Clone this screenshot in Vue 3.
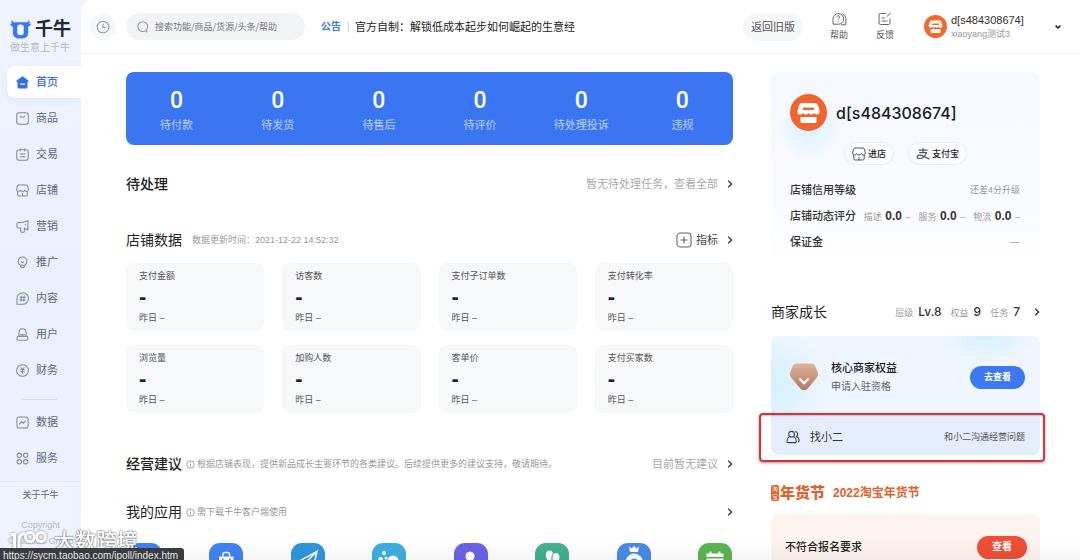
<template>
    <div class="shell">
        <aside class="sidebar">
            <div class="brand">
                <div class="brand-row">
                    <svg class="brand-logo" viewBox="0 0 22 22" aria-hidden="true">
                        <path d="M2 1.2C2.6 3 3.6 3.8 5.4 4h11.2c1.8-.2 2.8-1 3.4-2.8 1 2.4.8 4.600-1 6.200v7.400c0 3.800-2.400 6.200-8 6.200s-8-2.400-8-6.200V7.400C1.200 5.800 1 3.600 2 1.200z" fill="#3b78f0" />
                        <path d="M0 5.200l3.400 1v2.400C1.600 8.400.5 7.200 0 5.200zM22 5.200l-3.400 1v2.400c1.800-.2 2.900-1.400 3.400-3.400z" fill="#3b78f0" />
                        <rect x="7.600" y="6.400" width="6.800" height="11" rx="3" fill="#f3f6ff" />
                    </svg>
                    <span class="brand-name">千牛</span>
                </div>
                <p class="brand-slogan">做生意上千牛</p>
            </div>
            <nav class="nav">
                <template v-for="item in navItems" :key="item.name">
                    <hr v-if="item.divided" class="nav-divider">
                    <a href="#" :class="['nav-item', { active: item.active }]">
                        <svg class="nav-icon" viewBox="0 0 14 14" aria-hidden="true">
                            <path v-for="d in item.paths" :key="d" :d="d" />
                        </svg>
                        <span>{{ item.name }}</span>
                    </a>
                </template>
            </nav>
            <div class="sidebar-foot">
                <a href="#" class="about">关于千牛</a>
                <p class="copyright">Copyright</p>
                <p class="copyright">© Alibaba Group</p>
            </div>
        </aside>

        <div class="page">
            <header class="topbar">
                <button class="history" type="button" aria-label="历史">
                    <svg width="14" height="14" viewBox="0 0 14 14" fill="none" stroke="#8f9ab3" stroke-width="1.100">
                        <circle cx="7" cy="7" r="5.800" />
                        <path d="M7 3.800V7.400H9.600" />
                    </svg>
                </button>
                <label class="search">
                    <svg width="12" height="12" viewBox="0 0 12 12" fill="none" stroke="#8f9ab3" stroke-width="1.100">
                        <circle cx="5.800" cy="5.600" r="4.900" />
                        <path d="M8.800 9.400l1.600 1.900" />
                    </svg>
                    <input type="text" aria-label="搜索" placeholder="搜索功能/商品/货源/头条/帮助">
                </label>
                <a href="#" class="notice">
                    <strong>公告</strong>
                    <span class="notice-text">官方自制：解锁低成本起步如何崛起的生意经</span>
                </a>
                <button class="old-version" type="button">返回旧版</button>
                <button class="tool" type="button">
                    <svg width="16" height="14" viewBox="0 0 16 14" fill="none" stroke="#666" stroke-width="1">
                        <path d="M2 12.200V6.700a5.300 5.300 0 1 1 5.300 5.500z" />
                        <path d="M11.200 1.800a5 5 0 0 1 3.700 4.700v6.300H10" />
                        <path d="M5.700 5.400c0-2 3-2 3-.2C8.700 6.400 7.200 6.400 7.200 7.700M7.200 8.800v1" />
                    </svg>
                    <span>帮助</span>
                </button>
                <button class="tool" type="button">
                    <svg width="16" height="14" viewBox="0 0 16 14" fill="none" stroke="#666" stroke-width="1">
                        <path d="M9 1.500H3.500a1.500 1.500 0 0 0-1.500 1.500v8a1.500 1.500 0 0 0 1.500 1.500h8A1.500 1.500 0 0 0 13 11V6.500" />
                        <path d="M4.500 6h3.500M4.500 9h6M9.800 4.600l4-3.600" />
                    </svg>
                    <span>反馈</span>
                </button>
                <button class="account" type="button">
                    <svg class="avatar-small" viewBox="0 0 37 37" aria-hidden="true">
                        <circle cx="18.500" cy="18.500" r="18.500" fill="#f06a2e" />
                        <path :d="shopPath" fill="#fff" fill-rule="evenodd" />
                        <path d="M10.500 23h16v4.500a1.500 1.500 0 0 1-1.500 1.500H12a1.500 1.500 0 0 1-1.500-1.500z" fill="#fff" />
                    </svg>
                    <span class="account-text">
                        <span class="account-name">d[s484308674]</span>
                        <span class="account-sub">xiaoyang测试3</span>
                    </span>
                    <svg class="caret" width="6" height="4" viewBox="0 0 6 4" fill="none" stroke="#222" stroke-width="1.500">
                        <path d="M.6.6L3 3 5.400.6" />
                    </svg>
                </button>
            </header>

            <div class="content">
                <main class="main-col">
                    <ul class="banner">
                        <li v-for="name in todos" :key="name">
                            <b>0</b>
                            <span>{{ name }}</span>
                        </li>
                    </ul>

                    <section class="head head-todo">
                        <h2>待处理</h2>
                        <a href="#" class="more">暂无待处理任务，查看全部<svg viewBox="0 0 6 8"><path :d="arrow" /></svg></a>
                    </section>

                    <section class="head head-data">
                        <h2>店铺数据</h2>
                        <span class="hint">数据更新时间：2021-12-22 14:52:32</span>
                        <a href="#" class="more dark">
                            <svg class="plus" viewBox="0 0 16 16">
                                <rect x="1" y="1" width="14" height="14" rx="3.500" />
                                <path d="M4.500 8h7M8 4.500v7" />
                            </svg>
                            指标<svg viewBox="0 0 6 8"><path :d="arrow" /></svg>
                        </a>
                    </section>
                    <div class="stats">
                        <div v-for="name in stats" :key="name" class="stat">
                            <h3>{{ name }}</h3>
                            <b>-</b>
                            <p>昨日 –</p>
                        </div>
                    </div>

                    <section class="head head-advice">
                        <h2>经营建议</h2>
                        <span class="hint tip">
                            <svg viewBox="0 0 10 10"><circle cx="5" cy="5" r="4.200" /><path d="M5 4.500v3M5 2.500v1" /></svg>
                            根据店铺表现，提供新品成长主要环节的各类建议。后续提供更多的建议支持，敬请期待。
                        </span>
                        <a href="#" class="more">目前暂无建议<svg viewBox="0 0 6 8"><path :d="arrow" /></svg></a>
                    </section>

                    <section class="head head-apps">
                        <h2>我的应用</h2>
                        <span class="hint tip">
                            <svg viewBox="0 0 10 10"><circle cx="5" cy="5" r="4.200" /><path d="M5 4.500v3M5 2.500v1" /></svg>
                            需下载千牛客户端使用
                        </span>
                        <a href="#" class="more" aria-label="更多应用"><svg viewBox="0 0 6 8"><path :d="arrow" /></svg></a>
                    </section>
                    <div class="apps">
                        <a v-for="app in apps" :key="app.name" href="#" :aria-label="app.name">
                            <svg width="34" height="34" viewBox="0 0 34 34">
                                <rect width="34" height="34" rx="11" :fill="app.color" />
                                <path v-for="d in app.fills" :key="d" :d="d" fill="#fff" fill-rule="evenodd" />
                                <path v-for="d in app.lines" :key="d" :d="d" fill="none" stroke="#fff" stroke-width="1.500" />
                            </svg>
                        </a>
                    </div>
                </main>

                <aside class="side-col">
                    <section class="shop-card">
                        <div class="shop-top">
                            <svg class="avatar" viewBox="0 0 37 37" aria-hidden="true">
                                <circle cx="18.500" cy="18.500" r="18.500" fill="#f0642e" />
                                <path :d="shopPath" fill="#fff" fill-rule="evenodd" />
                                <path d="M10.500 23h16v4.500a1.500 1.500 0 0 1-1.500 1.500H12a1.500 1.500 0 0 1-1.500-1.500z" fill="#fff" />
                            </svg>
                            <h1>d[s484308674]</h1>
                        </div>
                        <div class="shop-links">
                            <button type="button">
                                <svg viewBox="0 0 14 14" fill="none" stroke="#555" stroke-width="1">
                                    <path v-for="d in storeIcon" :key="d" :d="d" />
                                </svg>
                                进店
                            </button>
                            <button type="button">
                                <svg viewBox="0 0 14 14" fill="none" stroke="#555" stroke-width="1.200">
                                    <path d="M2.500 3.200h9M7 1v4.500M3.200 5.600h7.300C9.500 8.500 7 11.500 3.500 11.500c-3.500 0-3-3.600.4-3.400 3 .2 6 2.600 9.600 3.900" />
                                </svg>
                                支付宝
                            </button>
                        </div>
                        <dl class="shop-rows">
                            <div>
                                <dt>店铺信用等级</dt>
                                <dd>还差4分升级</dd>
                            </div>
                            <div>
                                <dt>店铺动态评分</dt>
                                <dd class="scores">
                                    <span v-for="name in scores" :key="name">{{ name }} <b>0.0</b> –</span>
                                </dd>
                            </div>
                            <div>
                                <dt>保证金</dt>
                                <dd>––</dd>
                            </div>
                        </dl>
                    </section>

                    <section class="head head-grow">
                        <h2>商家成长</h2>
                        <a href="#" class="levels">
                            <span v-for="lv in levels" :key="lv.name">{{ lv.name }}<b>{{ lv.value }}</b></span>
                            <svg viewBox="0 0 6 8"><path :d="arrow" /></svg>
                        </a>
                    </section>
                    <section class="grow-card">
                        <div class="grow-top">
                            <svg width="30" height="30" viewBox="0 0 30 30" aria-hidden="true">
                                <defs>
                                    <linearGradient id="gem" x1="0" y1="0" x2="0" y2="1">
                                        <stop offset="0" stop-color="#e0b49c" />
                                        <stop offset="1" stop-color="#b5785c" />
                                    </linearGradient>
                                </defs>
                                <path d="M8 1.500h14q2.600 0 4 2.300l2.600 6q1.300 3.200-1 6L19 26.300q-4 4-8 0L2.400 15.800q-2.300-2.800-1-6l2.600-6Q5.400 1.500 8 1.500z" fill="url(#gem)" />
                                <path d="M10.300 16.500l4.700 4.700 4.700-4.700" fill="none" stroke="#fff" stroke-width="2.200" />
                            </svg>
                            <div class="grow-text">
                                <h3>核心商家权益</h3>
                                <p>申请入驻资格</p>
                            </div>
                            <button class="pill blue" type="button">去查看</button>
                        </div>
                        <a href="#" class="contact">
                            <svg width="14" height="14" viewBox="0 0 14 14" fill="none" stroke="#3c4252" stroke-width="1.100">
                                <circle cx="5.600" cy="4.200" r="2.800" />
                                <path d="M3.200 6.600C1.500 7.600.9 9 .9 11.400q0 1.200 1.200 1.200h7q1.200 0 1.200-1.200c0-2.400-.6-3.800-2.300-4.800" />
                                <path d="M9.200 1.500c2.800.2 3.200 3.600 1.200 4.900 1.900.8 2.700 2.200 2.700 4.200 0 .9-.4 1.300-1.200 1.300" />
                            </svg>
                            <span>找小二</span>
                            <small>和小二沟通经营问题</small>
                        </a>
                    </section>

                    <div class="festival">
                        <span class="festival-tag"><i>淘</i><i>宝</i></span>
                        <span class="festival-logo">年货节</span>
                        <strong>2022淘宝年货节</strong>
                    </div>
                    <section class="festival-card">
                        <span>不符合报名要求</span>
                        <button class="pill red" type="button">查看</button>
                    </section>
                </aside>
            </div>
        </div>

        <div class="fade"></div>
        <div class="watermark">
            <svg width="39" height="23" viewBox="0 0 39 23" fill="none" stroke="#fff" stroke-width="3">
                <path d="M2 4.500h3.500V22M10 22V10q0-6 6-6.500" />
                <circle cx="21" cy="7" r="4.500" />
                <circle cx="32" cy="7" r="4.500" />
            </svg>
            <span>大数跨境</span>
        </div>
        <div class="status">https://sycm.taobao.com/ipoll/index.htm</div>
    </div>
</template>

<script setup>
const arrow = 'M1.200.8L4.600 4 1.200 7.200';

const shopPath = 'M12 9h13q2 0 2.800 2l1.700 5.500q.5 4-2.500 4-2 0-3-1.500-1 1.500-2.750 1.500T18.500 19q-1 1.500-2.750 1.500T13 19q-1 1.500-3 1.500-3 0-2.500-4L9.200 11Q10 9 12 9zM14 13.500a1.300 1.300 0 0 0 0 2.600h9a1.300 1.300 0 0 0 0-2.600z';

const storeIcon = [
    'M3 1h8q1.200 0 1.600 1.200L13.300 6q0 2-1.800 2T9.500 6.500Q9 8 7 8T4.500 6.500Q4.300 8 2.500 8T.7 6l.7-3.800Q1.800 1 3 1z',
    'M1.800 8v3.500q0 1.500 1.500 1.500h7.400q1.500 0 1.500-1.500V8M7 10v3'
];

const navItems = [
    { name: '首页', active: true, paths: ['M6 .8q1-.7 2 0l5.200 4q.6.5.4 1.300l-1.200 0V12q0 1.500-1.500 1.500H3.100Q1.600 13.500 1.600 12V6.100H.4Q.2 5.300.8 4.800zM4.500 8v1.300h5V8z'] },
    { name: '商品', paths: ['M3.200.8h7.600q2.400 0 2.400 2.400v7.600q0 2.400-2.400 2.400H3.200Q.8 13.200.8 10.800V3.200Q.8.8 3.200.8z', 'M4.300 4.200q2.700 3 5.400 0'] },
    { name: '交易', paths: ['M3.200 2h7.600q2.400 0 2.400 2.400v6.400q0 2.400-2.400 2.400H3.200Q.8 13.200.8 10.800V4.400Q.8 2 3.200 2z', 'M4.800.5v3M9.200.5v3M4 6.500h6M4 9.500h6'] },
    { name: '店铺', paths: storeIcon },
    { name: '营销', paths: ['M1 4.300q0-1.500 1.500-1.500h5L12.800.9v9.700L9 8.800v3.400q0 1-1 1H6q-1 0-1-1V8.500H2.500Q1 8.500 1 7z', 'M9.500 5h1.500'] },
    { name: '推广', paths: ['M4.500 10C2.800 8.600 2.300 7.300 2.300 5.700a4.700 4.700 0 0 1 9.400 0c0 1.600-.5 2.900-2.200 4.300z', 'M5 10v1.500q2 2.500 4 0V10M5.500 6Q7 8 8.500 6'] },
    { name: '内容', paths: ['M1 13.200V7a6.200 6.200 0 1 1 6.200 6.200z', 'M5.900 3.800l-.6 6.400M8.900 3.800l-.6 6.400M3.800 5.700h6.600M3.600 8.500h6.600'] },
    { name: '用户', paths: ['M3.200 9V4.700a3.800 3.800 0 0 1 7.600 0V9z', 'M4.700 6.500q2.300 1.800 4.600 0M3 9h8q2 0 2 2t-2 2.200H3Q1 13.200 1 11.200T3 9z'] },
    { name: '财务', paths: ['M7 .7a6.300 6.300 0 1 1 0 12.600A6.300 6.300 0 1 1 7 .7z', 'M5 3.700l2 2.300 2-2.300M4.500 6.200h5M4.500 8.300h5M7 6v4.500'] },
    { name: '数据', divided: true, paths: ['M3.200 1h7.600Q13 1 13 3.200v7.600q0 2.200-2.200 2.200H3.200Q1 13 1 10.800V3.200Q1 1 3.200 1z', 'M3.500 9L6 6l2 1.800L10.500 5'] },
    { name: '服务', paths: ['M3.600 1.200a2.400 2.400 0 1 1 0 4.800 2.400 2.400 0 1 1 0-4.800z', 'M10.400 1.200a2.400 2.400 0 1 1 0 4.800 2.400 2.400 0 1 1 0-4.800z', 'M3.600 8.200a2.400 2.400 0 1 1 0 4.800 2.400 2.400 0 1 1 0-4.800z', 'M10.400 8.200a2.400 2.400 0 1 1 0 4.800 2.400 2.400 0 1 1 0-4.800z'] }
];

const todos = ['待付款', '待发货', '待售后', '待评价', '待处理投诉', '违规'];
const stats = ['支付金额', '访客数', '支付子订单数', '支付转化率', '浏览量', '加购人数', '客单价', '支付买家数'];
const scores = ['描述', '服务', '物流'];
const levels = [
    { name: '层级', value: 'Lv.8' },
    { name: '权益', value: '9' },
    { name: '任务', value: '7' }
];

const apps = [
    { name: '应用', color: '#3f82f4', fills: ['M10 12h14v14H10z'] },
    { name: '商品', color: '#4083f5', fills: ['M10 13.500h14.500V28H10zM13 15.500v2h1.500v-2zM20 15.500v2h1.500v-2z'], lines: ['M14 13.500v-2q0-2 2-2h2.500q2 0 2 2v2'] },
    { name: '推送', color: '#2f97dd', lines: ['M26 8.500L8.500 18l5 2.500L26 8.500l-3.500 15-6-2.500M13.500 20.500v5l3-3.500'] },
    { name: '互动', color: '#3cb0e0', fills: ['M12 8a2 2 0 1 1 0 4 2 2 0 1 1 0-4z', 'M8.500 14a2.300 2.300 0 1 1 0 4.600 2.300 2.300 0 1 1 0-4.600z', 'M14 13.500a1.500 1.500 0 1 1 0 3 1.500 1.500 0 1 1 0-3z', 'M21 12.500a5.500 5.500 0 1 1 0 11 5.500 5.500 0 1 1 0-11z'] },
    { name: '会员', color: '#6a63e6', fills: ['M16 8.500c3 0 4.500 2.200 4.500 4.700 0 2-1 3.400-2 4.300l7 4V26H7v-4.500l6.500-4c-1-.9-2-2.300-2-4.300 0-2.500 1.500-4.700 4.500-4.700z'] },
    { name: '客服', color: '#45b08f', fills: ['M14.500 7.500c2.500 0 3.300 1.500 3.400 3.500-1.900 2-1.900 5-.9 7.500l-1 3-4-5c-2-4-1.500-9 2.500-9z', 'M21.500 10c4 1 3.500 6 1.500 9l-3 6-2-5c-1-5-.5-11 3.500-10z'] },
    { name: '皇冠', color: '#4a8be6', fills: ['M12 3.500l2.500 2L17 3l2.500 2.500 2.500-2-1 5.500h-8z', 'M17 10.500a9 9 0 0 1 9 9l-2.500-1-1 2q-1-5-5.500-5-4 0-4 5l-4 2a9 9 0 0 1 8-12z', 'M17 17.500a3 3 0 1 1 0 6 3 3 0 1 1 0-6z'] },
    { name: '日历', color: '#5cb555', fills: ['M8.500 10.500h17V14h-17zM8.500 15.500h17V28h-17zM11 17.500v2h3v-2zM15.500 17.500v2h3v-2zM20 17.500v2h3v-2z', 'M11.500 8.500h2v3h-2zM20.500 8.500h2v3h-2z'] }
];
</script>

<style>
body {
    margin: 0;
    background: #fff;
}
</style>

<style scoped>
.shell {
    display: flex;
    height: 100vh;
    overflow: hidden;
    background: linear-gradient(180deg, #eff4ff 0%, #eaf0fe 50%, #eff3ff 100%);
    font-family: "Liberation Sans", "Noto Sans CJK SC", sans-serif;
    font-size: 11px;
    line-height: 16px;
    color: #333;
}
h1, h2, h3, p, ul, dl, dd { margin: 0; padding: 0; font-weight: 400; }
a { color: inherit; text-decoration: none; }
button {
    border: 0;
    padding: 0;
    background: none;
    color: inherit;
    font: inherit;
    cursor: pointer;
}
svg { display: block; flex: none; }

/* sidebar */
.sidebar {
    flex: none;
    width: 81px;
}
.brand {
    box-sizing: border-box;
    height: 66px;
    padding: 17px 0 0 10px;
}
.brand-row {
    display: flex;
    align-items: center;
    gap: 4px;
}
.brand-logo { width: 21px; height: 22px; }
.brand-name {
    font-size: 18px;
    line-height: 24px;
    font-weight: 700;
    color: #20283a;
}
.brand-slogan {
    font-size: 10px;
    line-height: 14px;
    color: #b4b9c6;
}
.nav-item {
    display: flex;
    align-items: center;
    gap: 7px;
    height: 32px;
    margin: 0 0 4px 7px;
    padding-left: 9px;
    border-radius: 8px 0 0 8px;
    color: #5f6880;
}
.nav-item.active {
    background: #fff;
    color: #3b6fd8;
    font-weight: 500;
    box-shadow: 0 2px 6px rgba(90, 120, 200, 0.1);
}
.nav-icon {
    width: 13px;
    height: 13px;
    fill: none;
    stroke: #7f88a0;
    stroke-width: 1.1;
}
.active .nav-icon { fill: #3470e4; fill-rule: evenodd; stroke: none; }
.nav-divider {
    width: 35px;
    height: 1px;
    margin: 13px 0 6px 22px;
    border: 0;
    background: #d3d8e4;
}
.sidebar-foot {
    margin-top: 7px;
    padding-top: 7px;
    border-top: 1px solid #e2e7f4;
    font-size: 9px;
    line-height: 12px;
    text-align: center;
    color: #5f6880;
}
.about { display: block; margin-bottom: 18px; }
.copyright { margin-bottom: 4px; color: #b4b9c6; white-space: nowrap; }

/* header */
.page {
    flex: 1;
    min-width: 0;
    background: #fff;
    border-top-left-radius: 10px;
}
.topbar {
    display: flex;
    align-items: center;
    box-sizing: border-box;
    height: 54px;
    padding: 0 19px 0 9px;
    border-bottom: 1px solid #f1f2f4;
}
.history {
    display: flex;
    align-items: center;
    justify-content: center;
    width: 26px;
    height: 26px;
    border-radius: 50%;
    background: #f6f7f9;
}
.search {
    display: flex;
    align-items: center;
    gap: 6px;
    box-sizing: border-box;
    width: 179px;
    height: 27px;
    margin-left: 10px;
    padding: 0 10px 0 11px;
    border-radius: 14px;
    background: #f2f3f7;
}
.search input {
    flex: 1;
    min-width: 0;
    padding: 0;
    border: 0;
    outline: 0;
    background: none;
    font: 9px "Noto Sans CJK SC", sans-serif;
    color: #333;
}
.search input::placeholder { color: #777; }
.notice {
    display: flex;
    align-items: center;
    margin-left: 16px;
    margin-right: auto;
    white-space: nowrap;
}
.notice strong { font-size: 10px; color: #3b78f0; }
.notice-text {
    margin-left: 7px;
    padding-left: 7px;
    background: linear-gradient(#c3d4f5, #c3d4f5) 0 center / 1px 10px no-repeat;
    color: #222;
}
.old-version {
    width: 60px;
    height: 28px;
    border-radius: 14px;
    background: #f6f7f9;
    color: #555;
}
.tool {
    display: flex;
    flex-direction: column;
    align-items: center;
    gap: 3px;
    width: 20px;
    margin-left: 26px;
    font-size: 9px;
    line-height: 12px;
    color: #555;
}
.account {
    display: flex;
    align-items: center;
    margin-left: 29px;
    text-align: left;
}
.avatar-small { width: 23px; height: 23px; }
.account-text {
    display: flex;
    flex-direction: column;
    width: 100px;
    margin-left: 4px;
    line-height: 14px;
}
.account-sub { font-size: 9px; color: #999; }
.caret { margin-left: 4px; }

/* content */
.content {
    display: grid;
    grid-template-columns: minmax(0, 1fr) 269px;
    gap: 38px;
    padding: 18px 40px 0 45px;
}
.banner {
    display: grid;
    grid-template-columns: repeat(6, 1fr);
    padding: 16px 0 12px;
    border-radius: 8px;
    background: #3b76f2;
    list-style: none;
    text-align: center;
}
.banner b {
    display: block;
    font: 500 23px/25px Roboto, sans-serif;
    color: #fff;
}
.banner span {
    display: block;
    margin-top: 4px;
    color: #bdd1fb;
}
.head {
    display: flex;
    align-items: center;
    height: 20px;
    white-space: nowrap;
}
.head h2 {
    font-size: 14px;
    line-height: 20px;
    font-weight: 500;
    color: #222;
}
.head-data h2, .head-apps h2, .head-grow h2 { font-weight: 400; }
.head-todo { margin-top: 29px; }
.head-data { margin-top: 36px; }
.head-advice { margin-top: 41px; }
.head-apps { margin-top: 28px; }
.hint {
    margin-left: 10px;
    font-size: 9px;
    color: #999;
}
.tip {
    display: flex;
    align-items: center;
    gap: 2px;
    margin-left: 4px;
}
.tip svg { width: 9px; height: 9px; fill: none; stroke: #999; }
.more {
    display: flex;
    align-items: center;
    margin-left: auto;
    color: #aaa;
}
.more.dark { color: #444; }
.more svg, .levels svg {
    width: 6px;
    height: 8px;
    margin-left: 9px;
    fill: none;
    stroke: #333;
    stroke-width: 1.3;
}
.more .plus {
    width: 16px;
    height: 16px;
    margin: 0 4px 0 0;
    stroke: #666;
    stroke-width: 1.1;
}
.stats {
    display: grid;
    grid-template-columns: repeat(4, 1fr);
    gap: 14px 18px;
    margin-top: 13px;
}
.stat {
    padding: 7px 13px;
    border-radius: 8px;
    background: #f6f8fa;
    font-size: 9px;
    line-height: 12px;
    color: #555;
}
.stat h3 { font-size: 9px; }
.stat b {
    display: block;
    margin: 5px 0;
    font-size: 22px;
    line-height: 20px;
    color: #222;
}
.apps {
    display: flex;
    justify-content: space-between;
    margin-top: 21px;
    padding: 0 1px 0 2px;
}

/* right column */
.shop-card {
    padding: 22px 20px 1px 19px;
    border-radius: 8px;
    background:
        radial-gradient(circle at 38px 56px, rgba(190, 230, 255, 0.5), transparent 32px),
        linear-gradient(180deg, #f5f8ff 0%, #f9fbff 70%, #fefeff 100%);
}
.shop-top {
    display: flex;
    align-items: center;
    gap: 9px;
}
.avatar { width: 37px; height: 37px; }
.shop-top h1 {
    font: 500 16px/22px Inter, sans-serif;
    color: #1c1c1c;
}
.shop-links {
    display: flex;
    gap: 14px;
    margin: 11px 0 0 54px;
}
.shop-links button {
    display: flex;
    align-items: center;
    gap: 2px;
    height: 23px;
    padding: 0 7px;
    border: 1px solid #e9ecf3;
    border-radius: 12px;
    background: rgba(255, 255, 255, 0.4);
    font-size: 9px;
    font-weight: 500;
    color: #222;
}
.shop-links svg { width: 14px; height: 14px; }
.shop-rows { margin-top: 12px; }
.shop-rows div {
    display: flex;
    align-items: center;
    justify-content: space-between;
    height: 26px;
    white-space: nowrap;
}
.shop-rows dt { font-size: 11px; font-weight: 500; }
.shop-rows dd { font-size: 9px; color: #999; }
.scores { display: flex; gap: 8px; }
.scores b { margin: 0 1px; font-size: 12px; color: #333; }
.head-grow {
    justify-content: space-between;
    margin-top: 46px;
}
.levels {
    display: flex;
    align-items: center;
    gap: 9px;
    font-size: 9px;
    color: #999;
}
.levels b {
    margin-left: 5px;
    font: 500 12px/16px Inter, sans-serif;
    color: #333;
}
.levels svg { margin-left: 5px; }
.grow-card {
    position: relative;
    margin-top: 14px;
    border-radius: 8px;
    background:
        radial-gradient(circle at 0 50px, rgba(205, 238, 255, 0.8), transparent 60px),
        radial-gradient(ellipse at 215px 0, rgba(205, 238, 255, 0.7), transparent 50px),
        #eff6ff;
}
/* highlight frame round the contact row */
.grow-card::after {
    content: "";
    position: absolute;
    inset: 77px -5px -7px -12px;
    border: 2px solid #c9383c;
    border-radius: 4px;
    box-shadow: 0 1px 3px rgba(120, 40, 40, 0.5), inset 0 1px 2px rgba(120, 40, 40, 0.3);
    pointer-events: none;
}
.grow-top {
    display: flex;
    align-items: center;
    height: 82px;
    padding: 0 15px 0 18px;
}
.grow-text { flex: 1; margin-left: 12px; }
.grow-text h3 {
    line-height: 18px;
    font-size: 11px;
    font-weight: 500;
    color: #1c1c1c;
}
.grow-text p {
    margin-top: 2px;
    font-size: 10px;
    color: #666;
}
.pill {
    height: 23px;
    border-radius: 12px;
    font-size: 9px;
    font-weight: 700;
    color: #fff;
}
.pill.blue { width: 55px; background: #3d78f2; }
.pill.red { width: 50px; background: #ee4f35; font-size: 10px; }
.contact {
    display: flex;
    align-items: center;
    height: 37px;
    padding: 0 15px;
    border-radius: 0 0 8px 8px;
    background: #e5ecfb;
}
.contact span { margin-left: 10px; }
.contact small { margin-left: auto; font-size: 9px; color: #555; }
.festival {
    display: flex;
    align-items: center;
    height: 20px;
    margin-top: 28px;
    color: #e2602c;
    white-space: nowrap;
}
.festival-tag {
    display: flex;
    flex-direction: column;
    width: 8px;
    border-radius: 2px;
    background: #e2602c;
    font-size: 6px;
    line-height: 8px;
    text-align: center;
    color: #fbe3d6;
}
.festival-tag i { font-style: normal; }
.festival-logo {
    margin-left: 1px;
    font-size: 15px;
    line-height: 20px;
    font-weight: 900;
}
.festival strong { margin-left: 8px; font-size: 12px; }
.festival-card {
    display: flex;
    align-items: center;
    justify-content: space-between;
    height: 66px;
    margin-top: 11px;
    padding: 0 13px 0 14px;
    border-radius: 8px;
    background: #fdf4ef;
    font-weight: 500;
    color: #222;
}

/* overlays at the bottom edge */
.fade {
    position: fixed;
    inset: auto 0 0 81px;
    height: 20px;
    background: linear-gradient(180deg, transparent, rgba(0, 0, 0, 0.04));
    pointer-events: none;
}
.watermark {
    position: fixed;
    left: 9px;
    bottom: 6px;
    display: flex;
    align-items: center;
    gap: 6px;
    font-size: 21px;
    line-height: 26px;
    font-weight: 500;
    color: #fff;
    text-shadow: 0 0 2px #666, 0 0 2px #888;
    white-space: nowrap;
}
.watermark svg { filter: drop-shadow(0 0 1px #777); }
.status {
    position: fixed;
    left: 0;
    bottom: 0;
    height: 12px;
    padding: 0 6px 0 3px;
    border-top-right-radius: 3px;
    overflow: hidden;
    background: #3a3c40;
    font-size: 10px;
    line-height: 16px;
    color: #e4e6ea;
}
</style>
